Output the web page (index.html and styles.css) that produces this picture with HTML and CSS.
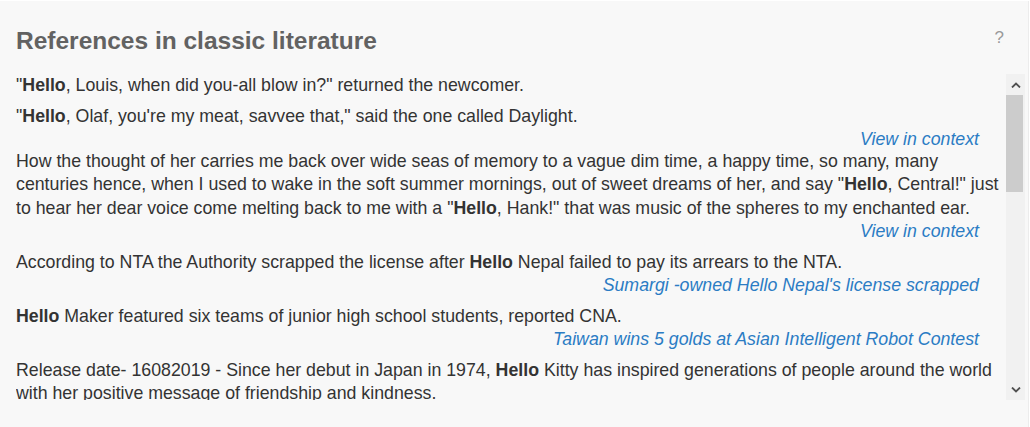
FILE: index.html
```html
<!DOCTYPE html>
<html lang="en">
<head>
<meta charset="utf-8">
<title>References in classic literature</title>
<link rel="stylesheet" href="styles.css">
</head>
<body>
<section class="panel">
  <header class="panel-head">
    <h2 class="panel-title">References in classic literature</h2>
    <span class="help">?</span>
  </header>
  <div class="scroller">
    <div class="entries">
      <div class="entry">
        <p class="quote">"<b>Hello</b>, Louis, when did you-all blow in?" returned the newcomer.</p>
      </div>
      <div class="entry entry-tight">
        <p class="quote">"<b>Hello</b>, Olaf, you're my meat, savvee that," said the one called Daylight.</p>
        <a class="source" href="#">View in context</a>
      </div>
      <div class="entry">
        <p class="quote">How the thought of her carries me back over wide seas of memory to a vague dim time, a happy time, so many, many centuries hence, when I used to wake in the soft summer mornings, out of sweet dreams of her, and say "<b>Hello</b>, Central!" just to hear her dear voice come melting back to me with a "<b>Hello</b>, Hank!" that was music of the spheres to my enchanted ear.</p>
        <a class="source" href="#">View in context</a>
      </div>
      <div class="entry">
        <p class="quote">According to NTA the Authority scrapped the license after <b>Hello</b> Nepal failed to pay its arrears to the NTA.</p>
        <a class="source" href="#">Sumargi -owned Hello Nepal's license scrapped</a>
      </div>
      <div class="entry">
        <p class="quote"><b>Hello</b> Maker featured six teams of junior high school students, reported CNA.</p>
        <a class="source" href="#">Taiwan wins 5 golds at Asian Intelligent Robot Contest</a>
      </div>
      <div class="entry">
        <p class="quote">Release date- 16082019 - Since her debut in Japan in 1974, <b>Hello</b> Kitty has inspired generations of people around the world with her positive message of friendship and kindness.</p>
      </div>
    </div>
    <div class="scrollbar">
      <div class="sb-btn">
        <svg width="10" height="6" viewBox="0 0 10 6"><path d="M1 5.5 L5 1.5 L9 5.5" fill="none" stroke="#505050" stroke-width="1.8"/></svg>
      </div>
      <div class="sb-thumb"></div>
      <div class="sb-track"></div>
      <div class="sb-btn">
        <svg width="10" height="6" viewBox="0 0 10 6"><path d="M1 0.5 L5 4.5 L9 0.5" fill="none" stroke="#505050" stroke-width="1.8"/></svg>
      </div>
    </div>
  </div>
</section>
</body>
</html>
```
FILE: styles.css
```css
html, body {
  margin: 0;
  padding: 0;
  background: #ffffff;
}

body {
  font-family: "Liberation Sans", Arial, sans-serif;
}

.panel {
  box-sizing: border-box;
  width: 1029px;
  height: 427px;
  margin-top: 1px;
  padding: 0 3px 0 16px;
  background: #f8f8f8;
  border-right: 1px solid #ececec;
  border-bottom: 1px solid #ececec;
}

.panel-head {
  display: flex;
  align-items: flex-start;
  justify-content: space-between;
  height: 73px;
}

.panel-title {
  margin: 26px 0 0 0;
  font-size: 24.5px;
  line-height: 28px;
  font-weight: bold;
  color: #626262;
}

.help {
  margin: 26px 21px 0 0;
  font-size: 17px;
  line-height: 22px;
  color: #9a9a9a;
}

.scroller {
  display: flex;
  height: 326px;
}

.entries {
  flex: 1;
  overflow: hidden;
  padding-right: 2px;
  display: flex;
  flex-direction: column;
  gap: 7.5px;
}

.entry {
  display: flex;
  flex-direction: column;
}

.entry-tight {
  margin-bottom: -9px;
}

.quote {
  margin: 0;
  font-size: 17.75px;
  line-height: 23.33px;
  color: #333333;
}

.source {
  align-self: flex-end;
  margin-right: 25px;
  font-size: 17.75px;
  line-height: 23.33px;
  font-style: italic;
  color: #2b7cc4;
  text-decoration: none;
}

.scrollbar {
  width: 19px;
  display: flex;
  flex-direction: column;
  background: #f1f1f1;
}

.sb-btn {
  height: 21px;
  display: flex;
  align-items: center;
  justify-content: center;
}

.sb-thumb {
  height: 97px;
  margin: 0 2px 0 0;
  background: #cccccc;
}

.sb-track {
  flex: 1;
}
```
